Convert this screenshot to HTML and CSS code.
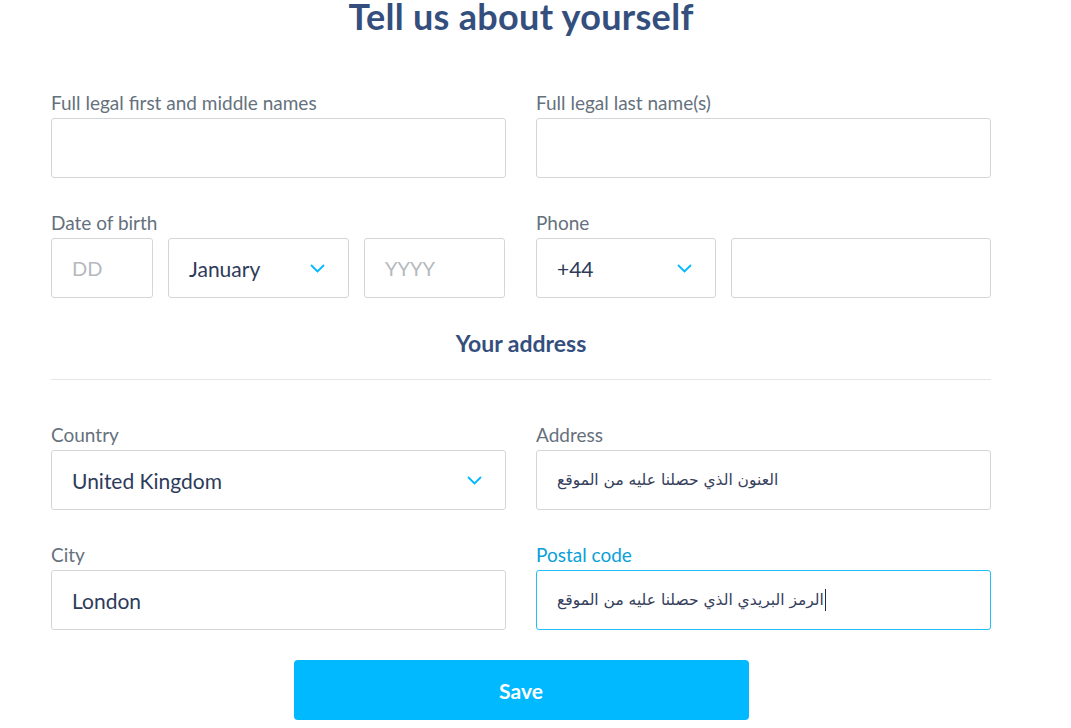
FILE: index.html
```html
<!DOCTYPE html>
<html>
<head>
<meta charset="utf-8">
<link rel="stylesheet" href="styles.css">
</head>
<body>
<div class="page">
  <h1 class="title">Tell us about yourself</h1>

  <div class="row first">
    <div class="field">
      <label class="label">Full legal first and middle names</label>
      <div class="box"></div>
    </div>
    <div class="field">
      <label class="label">Full legal last name(s)</label>
      <div class="box"></div>
    </div>
  </div>

  <div class="row">
    <div class="field">
      <label class="label">Date of birth</label>
      <div class="inline">
        <div class="box dd"><span class="ph">DD</span></div>
        <div class="box month"><span class="val">January</span><svg class="chev" width="15" height="9" viewBox="0 0 15 9"><path d="M1 1 L7.5 7.5 L14 1" fill="none" stroke="#00b9ff" stroke-width="1.8"/></svg></div>
        <div class="box yyyy"><span class="ph">YYYY</span></div>
      </div>
    </div>
    <div class="field">
      <label class="label">Phone</label>
      <div class="inline">
        <div class="box code"><span class="val">+44</span><svg class="chev" width="15" height="9" viewBox="0 0 15 9"><path d="M1 1 L7.5 7.5 L14 1" fill="none" stroke="#00b9ff" stroke-width="1.8"/></svg></div>
        <div class="box phone"></div>
      </div>
    </div>
  </div>

  <h2 class="subtitle">Your address</h2>
  <hr class="divider">

  <div class="row">
    <div class="field">
      <label class="label">Country</label>
      <div class="box"><span class="val">United Kingdom</span><svg class="chev" width="15" height="9" viewBox="0 0 15 9"><path d="M1 1 L7.5 7.5 L14 1" fill="none" stroke="#00b9ff" stroke-width="1.8"/></svg></div>
    </div>
    <div class="field">
      <label class="label">Address</label>
      <div class="box"><span class="val ar">العنون الذي حصلنا عليه من الموقع</span></div>
    </div>
  </div>

  <div class="row">
    <div class="field">
      <label class="label">City</label>
      <div class="box"><span class="val">London</span></div>
    </div>
    <div class="field">
      <label class="label focus">Postal code</label>
      <div class="box focused"><span class="val ar">الرمز البريدي الذي حصلنا عليه من الموقع</span><span class="caret"></span></div>
    </div>
  </div>

  <div class="actions">
    <button class="save">Save</button>
  </div>
</div>
</body>
</html>
```

FILE: styles.css
```css
* { box-sizing: border-box; }
html, body { margin: 0; padding: 0; background: #fff; }
body { font-family: Lato, "Open Sans", sans-serif; color: #2d3b5a; }

.page {
  width: 940px;
  margin-left: 51px;
}

.title {
  margin: 0;
  height: 60px;
  line-height: 32px;
  font-size: 36px;
  font-weight: 700;
  letter-spacing: 0.3px;
  text-align: center;
  color: #344f7d;
}

.row {
  display: grid;
  grid-template-columns: 455px 455px;
  column-gap: 30px;
  margin-top: 34px;
}
.row.first { margin-top: 32px; }

.field { display: flex; flex-direction: column; }

.label {
  display: block;
  font-size: 19px;
  line-height: 22px;
  color: #65717d;
  margin-bottom: 4px;
}
.label.focus { color: #0a9fd8; }

.box {
  height: 60px;
  border: 1px solid #d3d6d9;
  border-radius: 3px;
  display: flex;
  align-items: center;
  padding: 0 23px 0 20px;
  background: #fff;
}
.box.focused { border-color: #22c0fb; }

.inline { display: flex; gap: 15px; }
.dd { width: 102px; }
.month { width: 181px; }
.yyyy { width: 141px; }
.code { width: 180px; }
.phone { width: 260px; }

.ph { font-size: 20px; color: #b5b9bd; }
.val { font-size: 21px; color: #2d3b5a; }
.ar { font-family: "DejaVu Sans", sans-serif; font-size: 15.5px; color: #34405c; }

.chev { margin-left: auto; margin-top: 1px; }

.caret {
  display: inline-block;
  width: 1px;
  height: 22px;
  background: #1e2a48;
  margin-left: 1px;
}

.subtitle {
  margin: 31px 0 0 0;
  text-align: center;
  font-size: 23px;
  font-weight: 700;
  color: #344f7d;
  line-height: 28px;
}

.divider {
  border: 0;
  border-top: 1px solid #e3e5e8;
  margin: 22px 0 0 0;
  height: 0;
}

.divider + .row { margin-top: 44px; }

.actions { display: flex; justify-content: center; margin-top: 30px; }

.save {
  width: 455px;
  height: 60px;
  border: 0;
  border-radius: 4px;
  background: #00b9ff;
  color: #fff;
  font-family: Lato, sans-serif;
  font-weight: 700;
  font-size: 21px;
}
```
